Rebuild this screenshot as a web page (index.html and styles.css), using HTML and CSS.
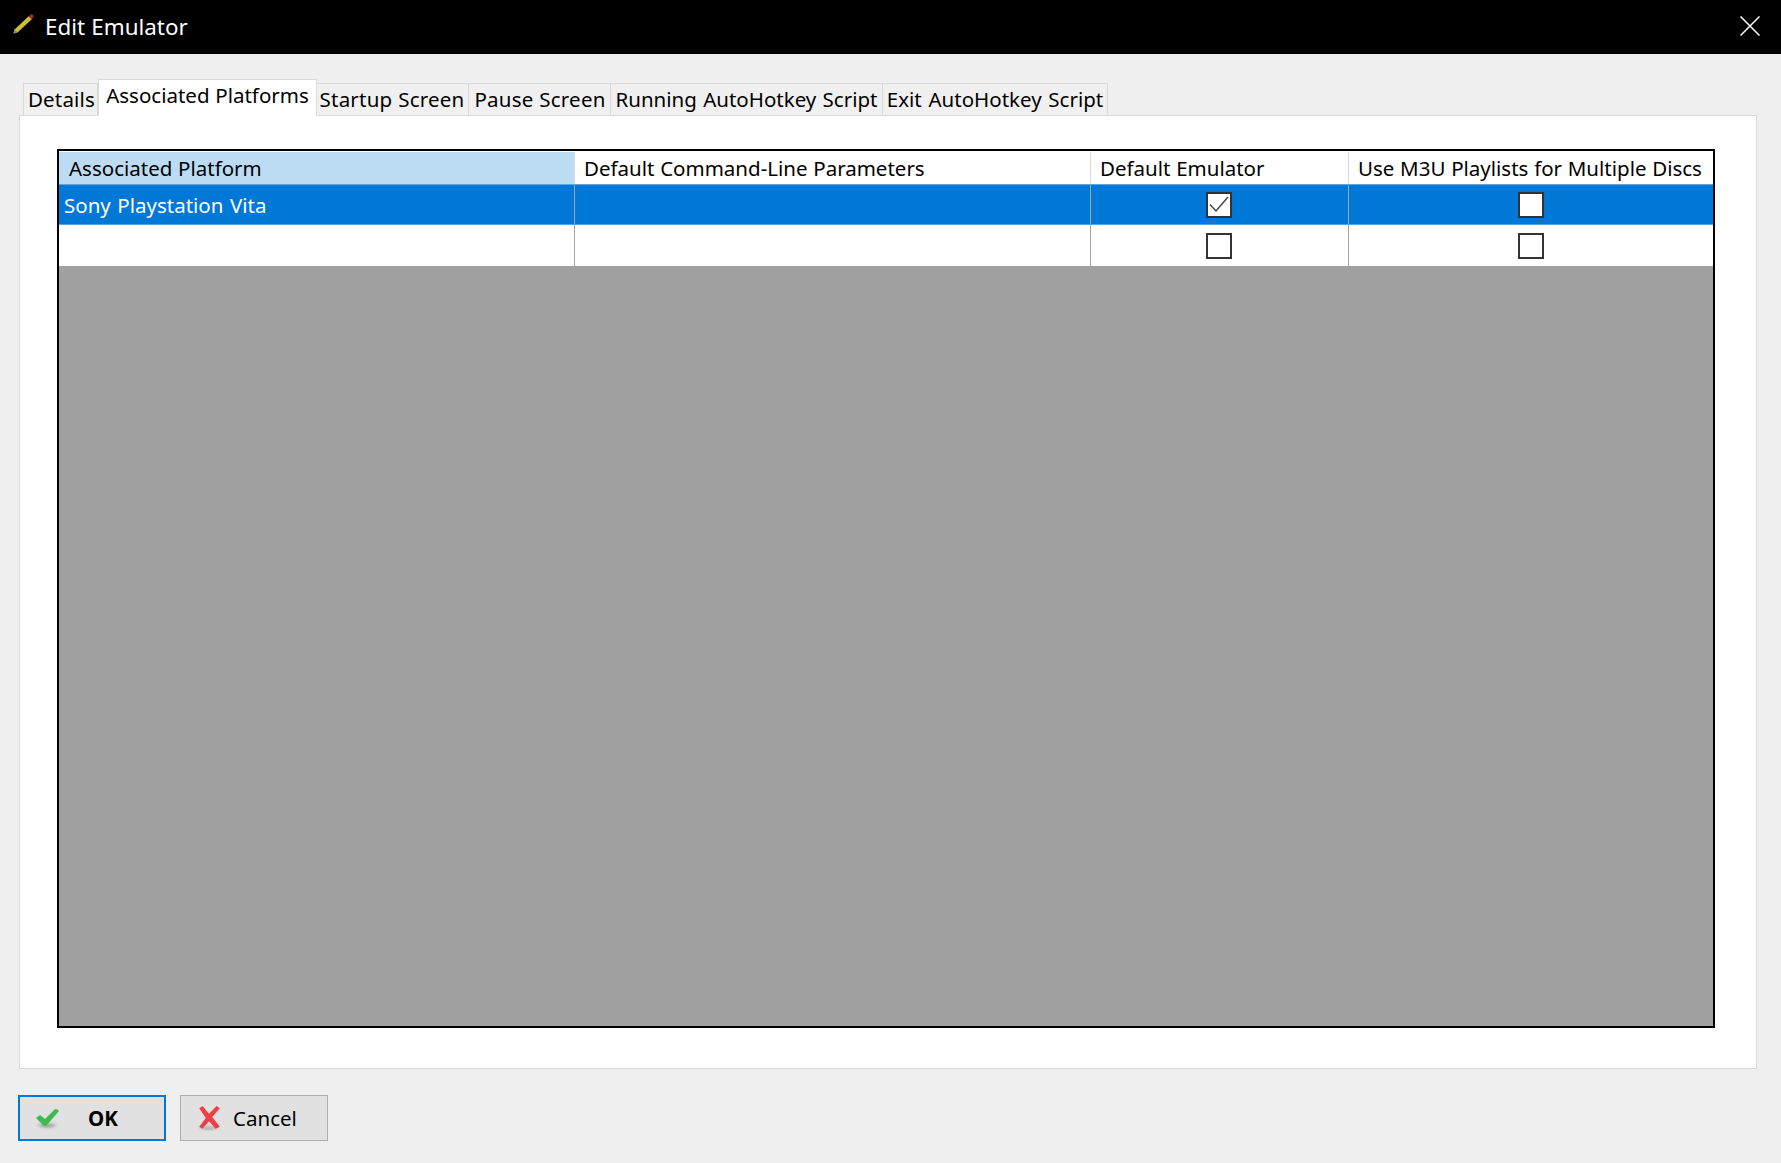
FILE: index.html
```html
<!DOCTYPE html>
<html lang="en">
<head>
<meta charset="utf-8">
<title>Edit Emulator</title>
<link rel="stylesheet" href="styles.css">
</head>
<body>
<div class="window">
  <header class="titlebar">
    <svg class="title-icon" viewBox="0 0 24 24" width="24" height="24">
      <path d="M2.5 21.5 L3.5 17.5 L18 4 L21 7 L6.5 20.5 Z" fill="#cfc030"/>
      <path d="M2.5 21.5 L3.5 17.5 L6.5 20.5 Z" fill="#8f8a5c"/>
      <path d="M17.5 4.5 L20 2.5 Q21 2 22 3 Q23 4 22.5 5 L20.5 7.5 Z" fill="#a32f36"/>
    </svg>
    <span class="title-text">Edit Emulator</span>
    <svg class="close-icon" viewBox="0 0 20 20" width="20" height="20">
      <path d="M0.5 0.5 L19.5 19.5 M19.5 0.5 L0.5 19.5" stroke="#fff" stroke-width="1.5" fill="none"/>
    </svg>
  </header>
  <main class="content">
    <nav class="tabs">
      <div class="tab tab-details">Details</div>
      <div class="tab tab-active">Associated Platforms</div>
      <div class="tab tab-startup">Startup Screen</div>
      <div class="tab tab-pause">Pause Screen</div>
      <div class="tab tab-running">Running AutoHotkey Script</div>
      <div class="tab tab-exit">Exit AutoHotkey Script</div>
    </nav>
    <section class="pane">
      <div class="table">
        <div class="grid header">
          <div class="cell head head-current">Associated Platform</div>
          <div class="cell head">Default Command-Line Parameters</div>
          <div class="cell head">Default Emulator</div>
          <div class="cell head">Use M3U Playlists for Multiple Discs</div>
        </div>
        <div class="grid row row-selected">
          <div class="cell name">Sony Playstation Vita</div>
          <div class="cell"></div>
          <div class="cell center">
            <span class="check">
              <svg viewBox="0 0 22 21" width="22" height="21"><path d="M2 10.5 L8 17 L20 3" stroke="#444" stroke-width="1.4" fill="none"/></svg>
            </span>
          </div>
          <div class="cell center"><span class="check"></span></div>
        </div>
        <div class="grid row">
          <div class="cell name"></div>
          <div class="cell"></div>
          <div class="cell center"><span class="check"></span></div>
          <div class="cell center"><span class="check"></span></div>
        </div>
        <div class="empty"></div>
      </div>
    </section>
    <footer class="buttons">
      <button class="btn btn-default" type="button">
        <svg class="btn-icon" viewBox="0 0 28 24" width="28" height="24">
          <path class="icon-shadow" d="M3 19 Q13 24 23 19 Q13 16 3 19 Z" fill="#999"/>
          <path class="icon-soft" d="M2 12 L6 9 L11 13 L21 3 Q24 3 25 5 L12 20 Q10 20 9 19 Z" fill="#3dbb4e"/>
        </svg>
        <span class="btn-label-ok">OK</span>
      </button>
      <button class="btn btn-cancel" type="button">
        <svg class="btn-icon btn-icon-x" viewBox="0 0 24 24" width="26" height="26">
          <path class="icon-shadow" d="M2 21 Q12 25 22 21 Q12 18 2 21 Z" fill="#aaa"/>
          <path class="icon-soft" d="M3 3 L6 1 L12 8 L19 1 L22 3 L15 11 L22 20 L18 22 L12 15 L6 22 L3 20 L9 12 Z" fill="#ec3f47"/>
        </svg>
        <span class="btn-label-cancel">Cancel</span>
      </button>
    </footer>
  </main>
</div>
</body>
</html>
```
FILE: styles.css
```css
* { box-sizing: border-box; }
html, body { margin: 0; height: 100%; }
body {
  background: #efefef;
  font-family: "Noto Sans", "Open Sans", sans-serif;
  font-size: 20.5px;
  word-spacing: 0.4px;
  color: #000;
  overflow: hidden;
}
.window { height: 1163px; display: flex; flex-direction: column; }
.titlebar {
  height: 54px;
  flex: none;
  background: #000;
  color: #fff;
  display: flex;
  align-items: center;
  padding: 0 21px 2px 11px;
}
.title-icon { flex: none; margin-right: 10px; margin-top: -5px; filter: blur(0.5px); }
.title-text { font-size: 22.4px; }
.close-icon { margin-left: auto; }
.content { flex: 1; display: flex; flex-direction: column; padding: 25px 24px 0 18px; }
.tabs { display: flex; align-items: flex-end; height: 37px; padding-left: 5px; flex: none; position: relative; z-index: 1; margin-bottom: -1px; }
.tab {
  height: 33px;
  display: flex;
  align-items: center;
  justify-content: center;
  background: #f0f0f0;
  border: 1px solid #d9d9d9;
  border-left: 0;
  white-space: nowrap;
  line-height: 1;
}
.tab-details { width: 75px; border-left: 1px solid #d9d9d9; letter-spacing: 0.2px; padding-left: 2px; }
.tab-active { width: 219px; height: 37px; background: #fff; border-bottom-color: #fff; border-left: 1px solid #d9d9d9; padding-bottom: 5px; }
.tab-startup { width: 152px; letter-spacing: 0.2px; padding-right: 1px; }
.tab-pause { width: 142px; letter-spacing: 0.2px; padding-left: 1px; }
.tab-running { width: 272px; word-spacing: 1px; }
.tab-exit { width: 225px; word-spacing: 1.4px; }
.pane {
  height: 954px;
  flex: none;
  margin-left: 1px;
  background: #fff;
  border: 1px solid #d9d9d9;
  padding: 33px 41px 40px 37px;
}
.table {
  height: 100%;
  border: 2px solid #000;
  display: flex;
  flex-direction: column;
  background: #a0a0a0;
}
.grid { display: grid; grid-template-columns: 516px 516px 258px 1fr; flex: none; background: #fff; }
.header { height: 33px; padding-top: 1px; }
.cell { display: flex; align-items: center; white-space: nowrap; border-right: 1px solid #a6a6a6; min-width: 0; }
.cell:last-child { border-right: 0; }
.head { padding-left: 9px; border-right-color: #d9d9d9; }
.head-current { background: #bbdcf3; padding-left: 10px; }
.row { height: 41px; }
.row-selected { background: #0078d7; color: #fff; border-top: 1px solid #5aa5de; border-bottom: 1px solid #5aa5de; }
.name { padding-left: 5px; word-spacing: 1.2px; }
.center { justify-content: center; padding-right: 2px; }
.cell:last-child.center { padding-right: 0; }
.check {
  width: 26px;
  height: 26px;
  background: #fff;
  border: 2px solid #333;
  display: flex;
  align-items: center;
  justify-content: center;
}
.empty { flex: 1; }
.buttons { display: flex; gap: 14px; padding-top: 26px; }
.btn {
  width: 148px;
  height: 46px;
  background: #e1e1e1;
  border: 1px solid #adadad;
  font: inherit;
  color: #000;
  display: flex;
  align-items: center;
  padding: 0 0 0 14px;
}
.btn-default { border: 2px solid #0078d7; }
.btn-cancel { padding-left: 15px; }
.btn-icon { flex: none; }
.btn-label-ok { font-weight: 700; margin-left: 26px; }
.btn-label-cancel { margin-left: 11px; }
.icon-shadow { filter: blur(1.5px); }
.icon-soft { filter: blur(0.5px); }
```
